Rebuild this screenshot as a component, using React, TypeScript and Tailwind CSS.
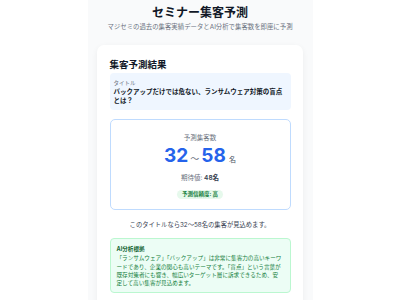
import React from "react";

const font = { fontFamily: 'Inter, "Noto Sans CJK JP", "Noto Sans", sans-serif' };

export default function App() {
  return (
    <div className="w-full min-h-[300px] bg-white flex justify-center" style={font}>
      <div className="w-[225px] bg-[#f9fafb] px-[9.5px] pt-[5px] pb-[20px]">
        <h1 className="text-center text-[12px] leading-[16px] font-bold text-[#111827]">
          セミナー集客予測
        </h1>
        <p className="mt-[1.5px] text-center text-[6.4px] leading-[9px] text-[#6b7280] whitespace-nowrap">
          マジセミの過去の集客実績データとAI分析で集客数を即座に予測
        </p>

        <div className="mt-[13.5px] bg-white rounded-[7px] shadow-[0_2px_6px_rgba(0,0,0,0.06)] px-[12.5px] pt-[13px] pb-[20px]">
          <h2 className="text-[9.5px] leading-[13px] font-bold text-[#111827]">集客予測結果</h2>

          <div className="mt-[2px] bg-[#eff6ff] rounded-[4px] px-[4px] pt-[5.5px] pb-[3.5px]">
            <div className="text-[5.5px] leading-[8.5px] text-[#6b7280]">タイトル</div>
            <div className="mt-[0.5px] text-[6.5px] leading-[9.4px] font-bold text-[#111827]">
              バックアップだけでは危ない、ランサムウェア対策の盲点とは？
            </div>
          </div>

          <div className="mt-[9.5px] border border-[#bfdbfe] rounded-[5px] bg-white pt-[13.5px] pb-[10px] flex flex-col items-center">
            <div className="text-[6.5px] leading-[9px] text-[#6b7280]">予測集客数</div>
            <div className="mt-[3.5px] flex items-baseline leading-[19px]">
              <span className="text-[19px] font-bold text-[#2563eb] leading-[19px]">32</span>
              <span className="mx-[2px] text-[9px] text-[#6b7280]">～</span>
              <span className="text-[19px] font-bold text-[#2563eb] leading-[19px]">58</span>
              <span className="ml-[3px] text-[7px] text-[#4b5563]">名</span>
            </div>
            <div className="mt-[4.5px] text-[6.5px] leading-[9px] text-[#6b7280]">
              期待値: <span className="text-[#374151] font-semibold">48名</span>
            </div>
            <div className="mt-[7px] h-[9px] px-[5px] rounded-full bg-[#e6f9ec] text-[#15803d] text-[5.5px] font-bold flex items-center">
              予測信頼度: 高
            </div>
          </div>

          <p className="mt-[11px] text-center text-[6.3px] leading-[9px] text-[#374151]">
            このタイトルなら32〜58名の集客が見込めます。
          </p>

          <div className="mt-[8px] bg-[#ecfdf5] border border-[#bbf7d0] rounded-[4px] px-[6px] pt-[6px] pb-[4px]">
            <div className="text-[5.6px] leading-[8px] font-bold text-[#166534]">AI分析根拠</div>
            <p className="mt-[1.5px] text-[5.6px] leading-[8.3px] text-[#15803d]">
              「ランサムウェア」「バックアップ」は非常に集客力の高いキーワードであり、企業の関心も高いテーマです。「盲点」という言葉が既存対策者にも響き、幅広いターゲット層に訴求できるため、安定して高い集客が見込めます。
            </p>
          </div>
        </div>
      </div>
    </div>
  );
}
